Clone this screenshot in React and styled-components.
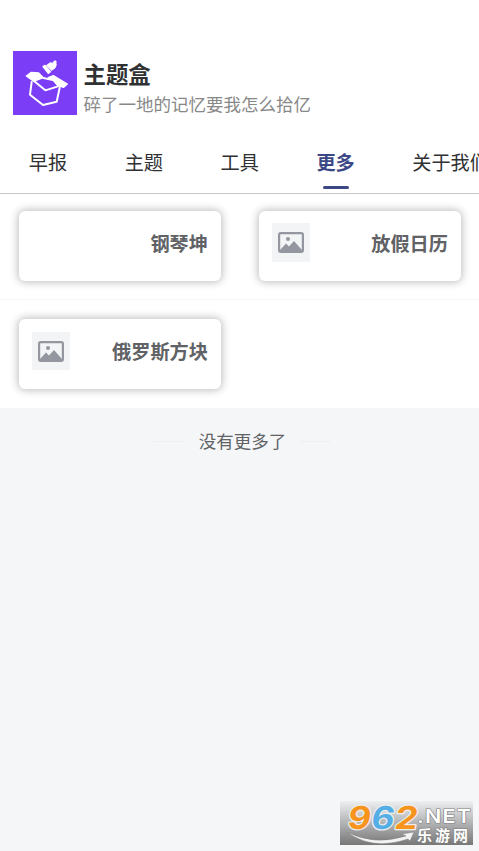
import { useState } from "react"
import styled, { createGlobalStyle } from "styled-components"

const GlobalStyle = createGlobalStyle`
  * {
    box-sizing: border-box;
  }
  body {
    margin: 0;
    background: #f4f6f8;
    font-family: "Noto Sans CJK SC", "Noto Sans", sans-serif;
  }
`

const Page = styled.div`
  height: 851px;
  display: flex;
  flex-direction: column;
  overflow: hidden;
  position: relative;
`

const Header = styled.header`
  height: 134px;
  padding: 51px 13px 0;
  display: flex;
  gap: 6.5px;
  background: #fff;
`

const HeaderText = styled.div`
  padding-top: 7px;
  white-space: nowrap;
`

const Title = styled.h1`
  margin: 0;
  font-size: 22.4px;
  line-height: 30px;
  font-weight: 700;
  color: #303133;
`

const Subtitle = styled.p`
  margin: 0;
  font-size: 17.5px;
  line-height: 31px;
  color: #888;
`

const Tabs = styled.nav`
  height: 60px;
  flex: none;
  display: flex;
  background: #fff;
  border-bottom: 1px solid #c8c8ca;
`

const Tab = styled.button`
  flex: none;
  height: 59px;
  padding: 14px 28.75px 0;
  display: flex;
  flex-direction: column;
  align-items: center;
  border: 0;
  background: none;
  font-family: inherit;
  font-size: 19.2px;
  line-height: 28px;
  font-weight: ${({ $active }) => ($active ? 700 : 400)};
  color: ${({ $active }) => ($active ? "#3c4886" : "#303133")};

  &::after {
    content: "";
    width: 26px;
    height: 3px;
    margin-top: 10px;
    border-radius: 2px;
    background: ${({ $active }) => ($active ? "#3c4886" : "transparent")};
  }
`

const Grid = styled.main`
  display: flex;
  flex-direction: column;
  background: #fff;
`

const GridRow = styled.div`
  height: ${({ $last }) => ($last ? 108 : 106)}px;
  padding: ${({ $last }) => ($last ? 19 : 17)}px 18px 0 19px;
  display: grid;
  grid-template-columns: 202px 202px;
  column-gap: 38px;
  align-content: start;
  border-bottom: ${({ $last }) => ($last ? "0" : "1px solid #f5f5f6")};
`

const Card = styled.div`
  height: 70px;
  padding: 12px 13px 0;
  display: flex;
  justify-content: space-between;
  border-radius: 6px;
  background: #fff;
  box-shadow: 0 0 8px 1px rgba(0, 0, 0, 0.27);
`

const Thumb = styled.div`
  width: 38px;
  height: 39px;
  display: flex;
  align-items: center;
  justify-content: center;
  background: ${({ $empty }) => ($empty ? "transparent" : "#f2f4f6")};

  ${GridRow}:last-child & {
    height: 38px;
    margin-top: 1px;
  }
`

const CardName = styled.span`
  padding-top: 6px;
  font-size: 19.2px;
  line-height: 28px;
  font-weight: 700;
  color: #606266;
`

const NoMore = styled.div`
  padding-top: 19px;
  display: flex;
  align-items: center;
  justify-content: center;
  gap: 13px;
  font-size: 17.5px;
  line-height: 28px;
  color: #606266;
  transform: translateX(3px);

  &::before,
  &::after {
    content: "";
    width: 32px;
    height: 1px;
    background: #eff0f3;
  }
`

const Watermark = styled.svg`
  position: absolute;
  left: 340px;
  top: 801px;
  width: 133px;
  height: 44px;
`

const BoxLogo = () => (
  <svg width="64" height="64" viewBox="0 0 192 192">
    <rect width="192" height="192" fill="#7b3df5" />
    <g fill="#fff" stroke="#fff" strokeLinejoin="round" strokeLinecap="round">
      <path d="M40 75 55 64 77 66 91 80 62 91Z" strokeWidth="4" />
      <path d="M106 80 121 74 163 99 152 109 134 104 120 87Z" strokeWidth="4" />
      <path
        d="M91 81 120 87 M56 93 51 131 90 162 131 152 140 110"
        fill="none"
        strokeWidth="6"
      />
      <path d="M64 91 97 118 135 106" fill="none" strokeWidth="6" />
      <path d="M90 47 96 43 112 62 106 67Z" strokeWidth="4" />
      <path
        d="M101 43 112 35 119 37 124 30 129 30 129 38 130 41 126 51 116 58Z"
        strokeWidth="3"
      />
    </g>
  </svg>
)

const PictureIcon = () => (
  <svg width="26" height="21" viewBox="0 0 26 21">
    <rect
      x="1.1"
      y="1.1"
      width="23.8"
      height="18.8"
      rx="1.6"
      fill="none"
      stroke="#94979f"
      strokeWidth="2.2"
    />
    <circle cx="10" cy="7" r="2" fill="#94979f" />
    <path d="M2 18 8 11.5 11 14.5 16 9 24 18V19H2Z" fill="#94979f" />
  </svg>
)

const Digit = ({ x, fill, children }) => (
  <text
    transform={`translate(${x} 27.5) skewX(-9)`}
    textLength="23"
    lengthAdjust="spacingAndGlyphs"
    fill={fill}
  >
    {children}
  </text>
)

const SiteMark = () => (
  <Watermark viewBox="0 0 133 44">
    <defs>
      <linearGradient id="plate" x1="0" y1="0" x2="0" y2="1">
        <stop offset="0" stopColor="#eeeff1" />
        <stop offset="0.45" stopColor="#b8b9bb" />
        <stop offset="1" stopColor="#777" />
      </linearGradient>
    </defs>
    <rect width="133" height="44" fill="url(#plate)" />
    <path
      d="M7 31Q34 45 66 35L62 33 74 31 70 40 68 38Q32 50 7 31Z"
      fill="#f3f3f3"
      stroke="#808080"
      strokeWidth="0.5"
    />
    <g
      fontFamily="Inter"
      fontWeight="700"
      fontSize="31.5"
      stroke="#eee"
      strokeWidth="2.4"
      strokeLinejoin="round"
      paintOrder="stroke"
    >
      <Digit x="6.5" fill="#f7941e">
        9
      </Digit>
      <Digit x="30" fill="#55aee5">
        6
      </Digit>
      <Digit x="53.5" fill="#f7941e">
        2
      </Digit>
    </g>
    <g fill="#fff" stroke="#808080" strokeWidth="1.2" paintOrder="stroke">
      <text
        x="77"
        y="22"
        fontFamily="Inter"
        fontWeight="600"
        fontSize="18"
        letterSpacing="1"
        textLength="55"
        lengthAdjust="spacingAndGlyphs"
      >
        .NET
      </text>
      <text
        x="77"
        y="39.5"
        fontFamily="Noto Sans CJK SC"
        fontWeight="700"
        fontSize="15"
        textLength="51"
      >
        乐游网
      </text>
    </g>
  </Watermark>
)

const TABS = ["早报", "主题", "工具", "更多", "关于我们"]

const ROWS = [
  [
    { name: "钢琴坤", empty: true },
    { name: "放假日历" },
  ],
  [{ name: "俄罗斯方块" }],
]

const App = () => {
  const [active, setActive] = useState("更多")

  return (
    <Page>
      <GlobalStyle />
      <Header>
        <BoxLogo />
        <HeaderText>
          <Title>主题盒</Title>
          <Subtitle>碎了一地的记忆要我怎么拾亿</Subtitle>
        </HeaderText>
      </Header>
      <Tabs>
        {TABS.map(tab => (
          <Tab key={tab} $active={tab === active} onClick={() => setActive(tab)}>
            {tab}
          </Tab>
        ))}
      </Tabs>
      <Grid>
        {ROWS.map((row, idx) => (
          <GridRow key={idx} $last={idx === ROWS.length - 1}>
            {row.map(item => (
              <Card key={item.name}>
                <Thumb $empty={item.empty}>{!item.empty && <PictureIcon />}</Thumb>
                <CardName>{item.name}</CardName>
              </Card>
            ))}
          </GridRow>
        ))}
      </Grid>
      <NoMore>没有更多了</NoMore>
      <SiteMark />
    </Page>
  )
}

export default App
